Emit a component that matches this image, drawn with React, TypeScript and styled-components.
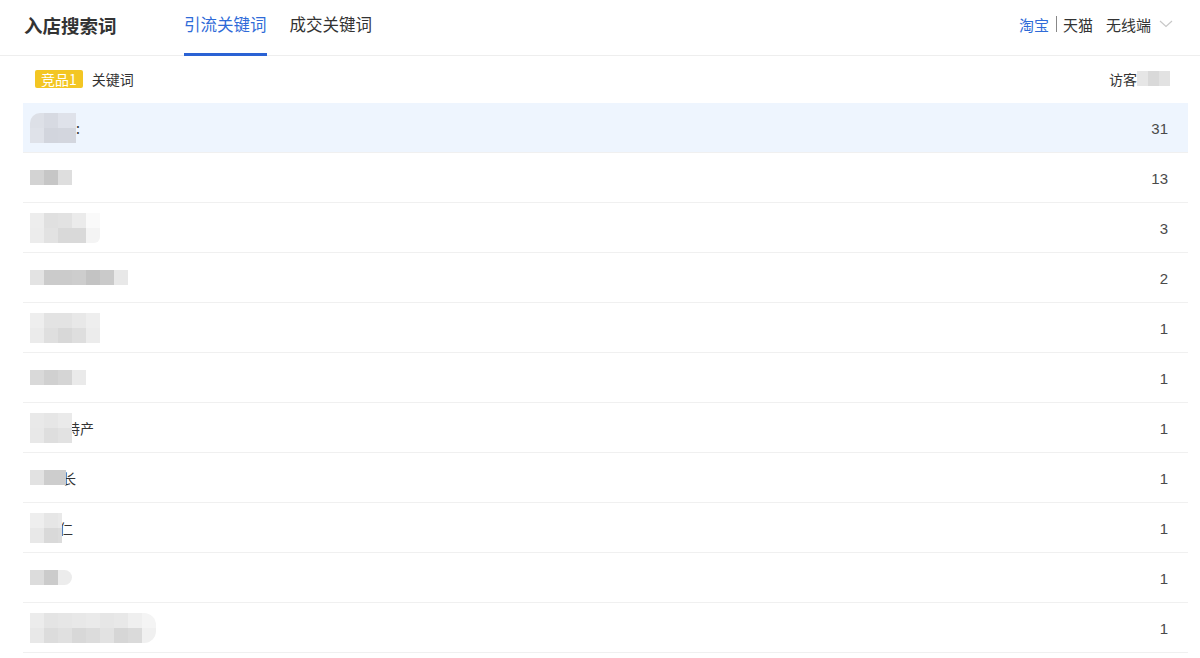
import styled, { createGlobalStyle } from "styled-components";

const GlobalStyle = createGlobalStyle`
  body {
    margin: 0;
    background: #fff;
    font-family: "Noto Sans CJK SC", "Noto Sans", "Liberation Sans", sans-serif;
  }
`;

const Page = styled.div`
  width: 1200px;
  height: 658px;
  overflow: hidden;
  background: #fff;
`;

const Header = styled.header`
  height: 55px;
  display: flex;
  align-items: stretch;
  padding: 0 24px;
  border-bottom: 1px solid #eeeeee;
`;

const Title = styled.h1`
  margin: 0;
  display: flex;
  align-items: center;
  padding-bottom: 6px;
  font-size: 18.5px;
  font-weight: 700;
  color: #333;
  width: 160px;
`;

const Tabs = styled.nav`
  display: flex;
  gap: 23px;
`;

const Tab = styled.div<{ $active?: boolean }>`
  display: flex;
  align-items: center;
  font-size: 16.5px;
  color: ${(p) => (p.$active ? "#2f6bd8" : "#333")};
  border-bottom: 3px solid ${(p) => (p.$active ? "#2a62d4" : "transparent")};
  padding-bottom: 5px;
  margin-bottom: -1px;
`;

const Platform = styled.div`
  margin-left: auto;
  display: flex;
  align-items: center;
  padding-bottom: 7px;
  font-size: 15px;
  color: #333;
  padding-right: 3px;
`;

const PlatformItem = styled.span<{ $active?: boolean }>`
  color: ${(p) => (p.$active ? "#2f6bd8" : "#333")};
`;

const Divider = styled.span`
  width: 1px;
  height: 16px;
  background: #888;
  margin: 0 6px 0 7px;
`;

const Device = styled.span`
  margin-left: 13px;
  display: flex;
  align-items: center;
  gap: 8px;
`;

const Table = styled.div`
  margin: 0 12px 0 23px;
`;

const HeadRow = styled.div`
  height: 47px;
  display: flex;
  align-items: center;
  padding: 0 18px 2px 12px;
  box-sizing: border-box;
  font-size: 14px;
  color: #333;
`;

const Badge = styled.span`
  background: #f3c623;
  color: #fff;
  font-size: 14px;
  line-height: 18px;
  padding: 0 6px 0 6px;
  border-radius: 2px;
  margin-right: 9px;
`;

const Visitor = styled.span`
  margin-left: auto;
  display: flex;
  align-items: center;
`;

const Row = styled.div<{ $hl?: boolean }>`
  height: 49px;
  display: flex;
  align-items: center;
  padding: 0 20px 0 7px;
  border-bottom: 1px solid #f0f0f0;
  background: ${(p) => (p.$hl ? "#eef5fe" : "#fff")};
  font-size: 14px;
  color: #444;
`;

const Keyword = styled.div`
  display: flex;
  align-items: center;
  flex: 1;
`;

const Count = styled.span`
  font-family: "Liberation Sans", Arial, sans-serif;
  font-size: 15px;
  color: #4a4a4a;
  padding-top: 1px;
`;

const Mosaic = styled.div<{ $round?: string }>`
  display: flex;
  flex-direction: column;
  position: relative;
  z-index: 1;
  border-radius: ${(p) => p.$round || "0"};
  overflow: hidden;
`;

const MosaicLine = styled.div`
  display: flex;
`;

const Cell = styled.span<{ $c: string; $w?: number }>`
  display: block;
  width: ${(p) => p.$w || 14}px;
  height: 15px;
  background: ${(p) => p.$c};
`;

const Partial = styled.span<{ $shift: number }>`
  margin-left: ${(p) => p.$shift}px;
  color: #333;
`;

type Blur = { lines: string[][]; widths?: number[]; round?: string; tail?: string; shift?: number };

const rows: { blur: Blur; count: number }[] = [
  {
    blur: {
      lines: [
        ["#dde0e7", "#d7dae2", "#dfe2ea"],
        ["#dfe2e9", "#d2d5dd", "#d3d6de"],
      ],
      widths: [14, 14, 18],
      round: "10px 0 0 0",
      tail: ":",
      shift: 0,
    },
    count: 31,
  },
  { blur: { lines: [["#d3d3d3", "#c6c6c6", "#dedede"]] }, count: 13 },
  {
    blur: {
      lines: [
        ["#ededed", "#e0e0e0", "#e2e2e2", "#ebebeb", "#fafafa"],
        ["#ececec", "#e2e2e2", "#d9d9d9", "#d9d9d9", "#f4f4f4"],
      ],
      round: "0 0 6px 0",
    },
    count: 3,
  },
  {
    blur: {
      lines: [["#e3e3e3", "#cbcbcb", "#cbcbcb", "#cdcdcd", "#c3c3c3", "#cacaca", "#e8e8e8"]],
    },
    count: 2,
  },
  {
    blur: {
      lines: [
        ["#eeeeee", "#e3e3e3", "#e3e3e3", "#e8e8e8", "#eeeeee"],
        ["#ebebeb", "#dfdfdf", "#d8d8d8", "#dedede", "#ececec"],
      ],
    },
    count: 1,
  },
  { blur: { lines: [["#d9d9d9", "#d0d0d0", "#d5d5d5", "#eaeaea"]] }, count: 1 },
  {
    blur: {
      lines: [
        ["#e9e9e9", "#e6e6e6", "#eaeaea"],
        ["#e8e8e8", "#dedede", "#e2e2e2"],
      ],
      tail: "特产",
      shift: -6,
    },
    count: 1,
  },
  {
    blur: { lines: [["#e2e2e2", "#cdcdcd", "#cdcdcd"]], widths: [14, 14, 8], tail: "长", shift: -4 },
    count: 1,
  },
  {
    blur: {
      lines: [
        ["#eeeeee", "#e6e6e6", "#e9e9e9"],
        ["#e8e8e8", "#d9d9d9", "#dcdcdc"],
      ],
      widths: [14, 14, 4],
      tail: "仁",
      shift: -3,
    },
    count: 1,
  },
  { blur: { lines: [["#dcdcdc", "#cbcbcb", "#ececec"]], round: "0 8px 8px 0" }, count: 1 },
  {
    blur: {
      lines: [
        ["#ececec", "#e4e4e4", "#e6e6e6", "#e8e8e8", "#eaeaea", "#e6e6e6", "#e8e8e8", "#efefef", "#f4f4f4"],
        ["#e8e8e8", "#dcdcdc", "#e0e0e0", "#d8d8d8", "#dcdcdc", "#e2e2e2", "#d6d6d6", "#dadada", "#f0f0f0"],
      ],
      round: "0 12px 12px 0",
    },
    count: 1,
  },
];

function Chevron() {
  return (
    <svg width="14" height="8" viewBox="0 0 14 8" fill="none">
      <path d="M1 1l6 5.5L13 1" stroke="#c8c8c8" strokeWidth="1.2" />
    </svg>
  );
}

function BlurBox({ blur }: { blur: Blur }) {
  return (
    <Mosaic $round={blur.round}>
      {blur.lines.map((line, i) => (
        <MosaicLine key={i}>
          {line.map((c, j) => (
            <Cell key={j} $c={c} $w={blur.widths?.[j]} />
          ))}
        </MosaicLine>
      ))}
    </Mosaic>
  );
}

export default function App() {
  return (
    <Page>
      <GlobalStyle />
      <Header>
        <Title>入店搜索词</Title>
        <Tabs>
          <Tab $active>引流关键词</Tab>
          <Tab>成交关键词</Tab>
        </Tabs>
        <Platform>
          <PlatformItem $active>淘宝</PlatformItem>
          <Divider />
          <PlatformItem>天猫</PlatformItem>
          <Device>
            无线端
            <Chevron />
          </Device>
        </Platform>
      </Header>
      <Table>
        <HeadRow>
          <Badge>竞品1</Badge>
          关键词
          <Visitor>
            访客
            <Mosaic>
              <MosaicLine>
                <Cell $c="#e6e6e6" $w={11} />
                <Cell $c="#d9d9d9" $w={11} />
                <Cell $c="#e2e2e2" $w={11} />
              </MosaicLine>
            </Mosaic>
          </Visitor>
        </HeadRow>
        {rows.map((r, i) => (
          <Row key={i} $hl={i === 0}>
            <Keyword>
              <BlurBox blur={r.blur} />
              {r.blur.tail && <Partial $shift={r.blur.shift || 0}>{r.blur.tail}</Partial>}
            </Keyword>
            <Count>{r.count}</Count>
          </Row>
        ))}
      </Table>
    </Page>
  );
}
